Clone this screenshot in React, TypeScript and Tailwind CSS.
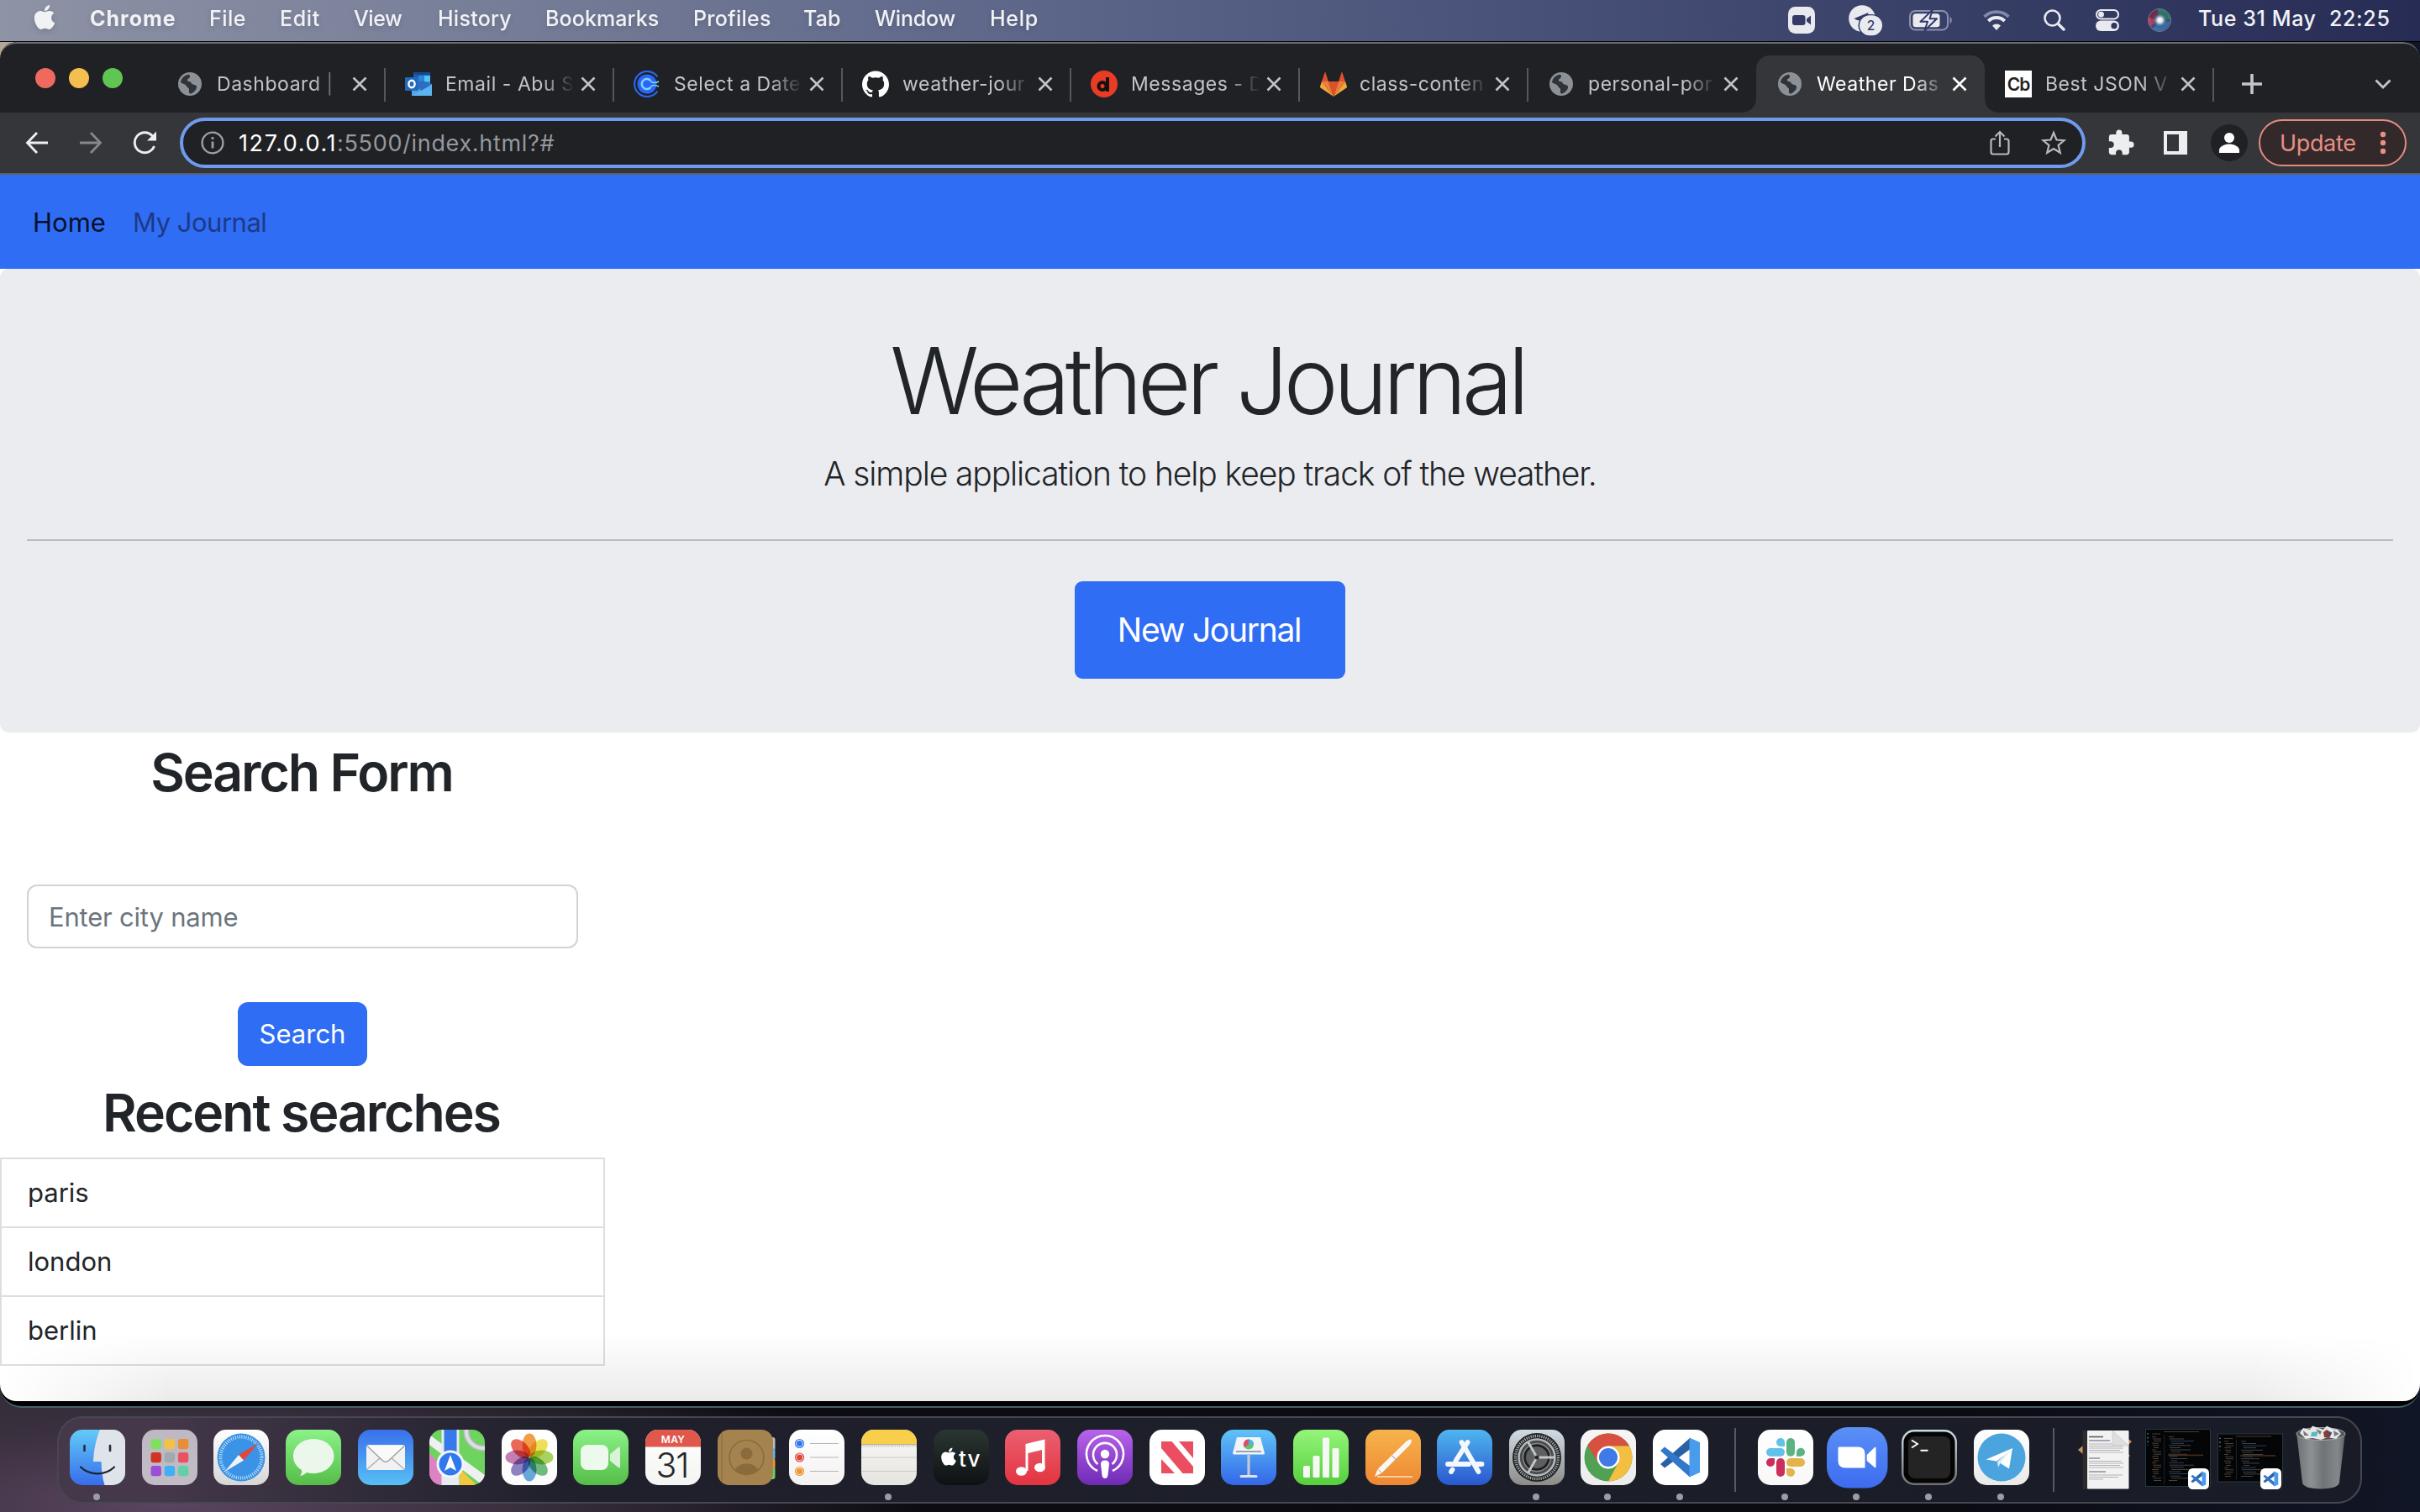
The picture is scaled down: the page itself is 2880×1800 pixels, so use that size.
import React, { type ReactNode } from 'react';
import { SiGithub } from 'react-icons/si';
import { FaApple } from 'react-icons/fa';
import { MdExtension } from 'react-icons/md';

/* ---------- Menu bar ---------- */

const menus = [
  { label: 'Chrome', cls: 'w-[142px] font-bold tracking-[1px]' },
  { label: 'File', cls: 'w-[84px] tracking-[0.5px]' },
  { label: 'Edit', cls: 'w-[88px] tracking-[0.6px]' },
  { label: 'View', cls: 'w-[100px] tracking-[-0.4px]' },
  { label: 'History', cls: 'w-[128px] tracking-[0.25px]' },
  { label: 'Bookmarks', cls: 'w-[176px] tracking-[0.1px]' },
  { label: 'Profiles', cls: 'w-[131px] tracking-[0.25px]' },
  { label: 'Tab', cls: 'w-[85px] tracking-[0.2px]' },
  { label: 'Window', cls: 'w-[137px] tracking-[-0.2px]' },
  { label: 'Help', cls: 'tracking-[0.7px]' },
];

function StatusIcons() {
  return (
    <div className="flex h-full items-center text-[#e9eaf0]">
      <svg width="32" height="32" viewBox="0 0 32 32">
        <rect width="32" height="32" rx="8.5" fill="#e9eaf0" />
        <rect x="5" y="10" width="15.5" height="12" rx="3" fill="#343b66" />
        <path d="M22 14.5 L27 10.5 V21.500 L22 17.500 Z" fill="#343b66" />
      </svg>
      <svg className="ml-10" width="40" height="40" viewBox="0 0 40 40">
        <circle cx="16" cy="18" r="15.800" fill="#e9eaf0" />
        <path d="M6.500 18 L23.500 11 L21 24 L15 20.500 L10 20 Z" fill="#343b66" />
        <rect x="11.500" y="13" width="29" height="26.500" rx="13.200" fill="#343b66" />
        <rect x="13" y="14.300" width="27" height="24" rx="12" fill="#e9eaf0" />
        <text x="26.500" y="32" textAnchor="middle" fontFamily="Inter" fontSize="15.500" fontWeight="500" fill="#343b66">2</text>
      </svg>
      <svg className="ml-8" width="52" height="26" viewBox="0 0 52 26">
        <rect x="1" y="2" width="45" height="22.500" rx="6.500" fill="none" stroke="#8b90b0" strokeWidth="2" />
        <path d="M48.500 9 C51.500 10 51.500 16 48.500 17 Z" fill="#8b90b0" />
        <rect x="4.500" y="5.300" width="32" height="16" rx="3.500" fill="#e9eaf0" />
        <path d="M28 0.500 L13.500 14.800 H22 L18.500 25.500 L33 11.300 H24.500 Z" fill="#e9eaf0" stroke="#31386a" strokeWidth="2" strokeLinejoin="round" />
      </svg>
      <svg className="ml-9" width="32" height="26" viewBox="0 0 32 26" fill="none">
        <path d="M1.500 9 A21 21 0 0 1 30.500 9" stroke="#8388ab" strokeWidth="3.800" />
        <path d="M6.300 14 A14 14 0 0 1 25.700 14" stroke="#e9eaf0" strokeWidth="4" />
        <path d="M16 25 L11 19.500 A7.500 7.500 0 0 1 21 19.500 Z" fill="#e9eaf0" />
      </svg>
      <svg className="ml-10" width="26" height="26" viewBox="0 0 26 26" fill="none" stroke="#e9eaf0">
        <circle cx="10.500" cy="10.500" r="9" strokeWidth="2.600" />
        <path d="M17.500 17.500 L24 24" strokeWidth="3.400" strokeLinecap="round" />
      </svg>
      <svg className="ml-9" width="28" height="28" viewBox="0 0 28 28">
        <rect x="1" y="2" width="26" height="10.500" rx="5.250" fill="none" stroke="#e9eaf0" strokeWidth="2" />
        <circle cx="6.500" cy="7.200" r="3.400" fill="#e9eaf0" />
        <rect x="0" y="14.500" width="28" height="12.500" rx="6.200" fill="#e9eaf0" />
        <circle cx="22" cy="20.700" r="3.600" fill="#2d3460" />
      </svg>
      <svg className="ml-[34px]" width="28" height="28" viewBox="0 0 28 28">
        <defs>
          <radialGradient id="siri" cx="0.52" cy="0.5" r="0.5">
            <stop offset="0" stopColor="#fff" />
            <stop offset="0.25" stopColor="#dfe6ee" />
            <stop offset="0.6" stopColor="#3a5a86" stopOpacity="0.5" />
            <stop offset="1" stopColor="#203050" stopOpacity="0" />
          </radialGradient>
        </defs>
        <circle cx="14" cy="14" r="13.500" fill="#3d5170" stroke="#6f80a0" />
        <path d="M14 14 L1 13 A13 13 0 0 1 12 1.200 Z" fill="#7c2a45" />
        <path d="M14 14 L12 1 A13 13 0 0 1 27 13 Z" fill="#2f8068" />
        <path d="M14 14 L3 21 A13 13 0 0 1 1 11 Z" fill="#c8405f" />
        <path d="M14 14 L26 16 A13 13 0 0 1 6 24 Z" fill="#3d77b8" />
        <circle cx="14" cy="14" r="12" fill="url(#siri)" />
      </svg>
    </div>
  );
}

function MenuBar() {
  return (
    <header className="flex h-[50px] shrink-0 items-center border-b border-black bg-linear-to-r from-[#8e93a5] via-[#555f84] to-[#272c55] pb-1 text-[25px] leading-none font-medium text-[#f1f2f6]">
      <FaApple className="mr-[39px] ml-[38px] -mt-1 h-[33px] w-[30px] drop-shadow-md" />
      <nav className="flex whitespace-nowrap drop-shadow-md">
        {menus.map((m) => (
          <span key={m.label} className={m.cls}>
            {m.label}
          </span>
        ))}
      </nav>
      <div className="ml-auto flex h-full items-center pr-[36px]">
        <div className="mr-[32px] pt-[3px]">
          <StatusIcons />
        </div>
        <span className="w-[156px] whitespace-nowrap tracking-[0.6px]">Tue 31 May</span>
        <span className="w-[72px] tracking-[0.65px]">22:25</span>
      </div>
    </header>
  );
}

/* ---------- Favicons ---------- */

function Globe() {
  return (
    <svg width="32" height="32" viewBox="0 0 32 32">
      <circle cx="16" cy="16" r="14" fill="#8b9197" />
      <path d="M5 14 C5.500 9 10 5.200 14.500 4.800 C16 5 16.500 7 15.500 8.500 C14 10 12.500 10 13 12 C13.500 13.500 17 12.500 17.500 14.500 C18 16.500 21 16.500 23 17.500 C25 19 24 22.500 21.500 24.500 C19.500 26.500 17.500 28 16 27.500 C14.500 26.500 15 23.500 15 22 C14.500 20 12.500 20.500 12 18.500 C11.500 16.500 7.500 16 5 14 Z" fill="#303338" />
    </svg>
  );
}

function Outlook() {
  return (
    <svg width="32" height="32" viewBox="0 0 32 32">
      <rect x="10" y="2" width="20" height="22" fill="#1a5fb4" />
      <rect x="10" y="2" width="20" height="3" fill="#174a8c" />
      <rect x="16" y="6" width="7" height="7" fill="#2f86d8" />
      <rect x="23" y="6" width="7" height="7" fill="#50c3f5" />
      <rect x="23" y="13" width="7" height="7" fill="#2f8fe0" />
      <path d="M8 16 L32 16 V30 H8 Z" fill="#4ea5e8" />
      <path d="M8 16 L20 24 L32 16 L20 12 Z" fill="#2b6fbf" />
      <path d="M8 30 L32 17 V30 Z" fill="#5bb4f0" />
      <rect x="0" y="8" width="16" height="16" rx="1" fill="#2468bd" />
      <ellipse cx="8" cy="16" rx="3.600" ry="4.200" fill="none" stroke="#fff" strokeWidth="2.400" />
    </svg>
  );
}

function Calendly() {
  return (
    <svg width="32" height="32" viewBox="0 0 32 32" fill="none">
      <path d="M28.500 7.500 A15 15 0 1 0 28.500 24.500" stroke="#2b66f0" strokeWidth="2.200" />
      <circle cx="16" cy="16" r="11.500" fill="#2b66f6" />
      <path d="M20.500 12.300 A6 6 0 1 0 20.500 19.700" stroke="#7fd8f5" strokeWidth="2.400" />
      <path d="M20.500 12.800 Q24 16 30 13 M20.500 19.200 Q24 16 30 19" stroke="#7fd8f5" strokeWidth="1.600" />
    </svg>
  );
}

function Disco() {
  return (
    <svg width="32" height="32" viewBox="0 0 32 32">
      <circle cx="16" cy="16" r="16" fill="#ea3c24" />
      <circle cx="14" cy="18.500" r="4.500" fill="none" stroke="#16110f" strokeWidth="4" />
      <path d="M18 8 H22 V25 H18 Z" fill="#16110f" />
    </svg>
  );
}

function Gitlab() {
  return (
    <svg width="34" height="32" viewBox="0 0 34 32">
      <path d="M17 31 L11 13 H23 Z" fill="#e0512b" />
      <path d="M17 31 L11 13 H3 Z" fill="#ef7d35" />
      <path d="M17 31 L23 13 H31 Z" fill="#ef7d35" />
      <path d="M3 13 L1 19 C0.800 19.600 1 20 1.500 20.500 L17 31 Z" fill="#f3a43f" />
      <path d="M31 13 L33 19 C33.200 19.600 33 20 32.500 20.500 L17 31 Z" fill="#f3a43f" />
      <path d="M3 13 H11 L7 1 Z M31 13 H23 L27 1 Z" fill="#dd5130" />
    </svg>
  );
}

function CodeBeautify() {
  return (
    <span className="flex size-8 items-center justify-center bg-white text-[21px] leading-none font-semibold tracking-[-1px] text-[#222]">
      Cb
    </span>
  );
}

/* ---------- Browser chrome ---------- */

type TabInfo = { title: string; icon: ReactNode; active?: boolean; divider?: boolean };

const tabs: TabInfo[] = [
  { title: 'Dashboard |', icon: <Globe />, divider: true },
  { title: 'Email - Abu S', icon: <Outlook />, divider: true },
  { title: 'Select a Date', icon: <Calendly />, divider: true },
  { title: 'weather-jour', icon: <SiGithub className="size-8 text-white" />, divider: true },
  { title: 'Messages - D', icon: <Disco />, divider: true },
  { title: 'class-conten', icon: <Gitlab />, divider: true },
  { title: 'personal-por', icon: <Globe /> },
  { title: 'Weather Das', icon: <Globe />, active: true },
  { title: 'Best JSON V', icon: <CodeBeautify />, divider: true },
];

function Cross({ className }: { className: string }) {
  return (
    <svg className={className} width="18" height="18" viewBox="0 0 18 18" fill="none" stroke="currentColor" strokeWidth="2.600">
      <path d="M1.500 1.500 L16.500 16.500 M16.500 1.500 L1.500 16.500" />
    </svg>
  );
}

function Tab({ title, icon, active, divider }: TabInfo) {
  return (
    <div className={`relative flex h-[68px] w-[272px] shrink-0 items-center rounded-t-2xl pl-6 ${active ? 'bg-[#35363a] text-white' : 'text-[#c2c4c7]'}`}>
      {active && (
        <>
          <span className="absolute bottom-0 -left-4 size-4 bg-[radial-gradient(circle_at_0_0,transparent_15.5px,#35363a_16px)]" />
          <span className="absolute -right-4 bottom-0 size-4 bg-[radial-gradient(circle_at_100%_0,transparent_15.5px,#35363a_16px)]" />
        </>
      )}
      <span className="flex w-12 shrink-0">{icon}</span>
      <span className="w-[160px] mask-r-from-[72%] mask-r-to-[96%] pb-px text-[23px] leading-[32px] tracking-[0.55px] whitespace-nowrap">{title}</span>
      <Cross className="ml-px shrink-0" />
      {divider && <span className="absolute top-[15px] right-[-1px] h-10 w-[2px] bg-[#54575b]" />}
    </div>
  );
}

function TabStrip() {
  return (
    <div className="flex h-[82px] items-end pl-[42px]">
      <div className="mb-[29px] flex gap-4">
        <span className="size-6 rounded-full bg-[#ee6a5f]" />
        <span className="size-6 rounded-full bg-[#f5bf4f]" />
        <span className="size-6 rounded-full bg-[#61c554]" />
      </div>
      <div className="ml-10 flex">
        {tabs.map((t) => (
          <Tab key={t.title} {...t} />
        ))}
      </div>
      <svg className="mb-[22px] ml-[34px]" width="24" height="24" viewBox="0 0 24 24" stroke="#c4c6c9" strokeWidth="3.600">
        <path d="M12 0 V24 M0 12 H24" />
      </svg>
      <svg className="mb-[28px] ml-[134px]" width="20" height="12" viewBox="0 0 20 12" fill="none" stroke="#c4c6c9" strokeWidth="2.800">
        <path d="M1.500 1.500 L10 10 L18.500 1.500" />
      </svg>
    </div>
  );
}

function Toolbar() {
  return (
    <div className="flex h-[74px] items-center border-b-2 border-[#5c5f63] bg-[#35363a] pl-[30px]">
      <svg width="28" height="28" viewBox="0 0 28 28" fill="none" stroke="#eceef0" strokeWidth="2.800">
        <path d="M27 14 H3 M14 2 L2.500 14 L14 26" />
      </svg>
      <svg className="ml-9" width="28" height="28" viewBox="0 0 28 28" fill="none" stroke="#85878b" strokeWidth="2.800">
        <path d="M1 14 H25 M14 2 L25.500 14 L14 26" />
      </svg>
      <svg className="ml-9" width="30" height="28" viewBox="0 0 30 28" fill="none" stroke="#eceef0" strokeWidth="2.900">
        <path d="M25.500 18 A12 12 0 1 1 23.500 6" />
        <path d="M28 0.500 V11.500 H17 Z" fill="#eceef0" stroke="none" />
      </svg>
      <div className="ml-[26px] flex h-[60px] w-[2268px] items-center rounded-full border-4 border-[#709aec] bg-[#202124] pl-[21px]">
        <svg width="28" height="28" viewBox="0 0 28 28" fill="none" stroke="#9aa0a6" strokeWidth="2.400">
          <circle cx="14" cy="14" r="12.400" />
          <path d="M14 12.500 V20.500 M14 7 V10" strokeWidth="2.800" />
        </svg>
        <span className="ml-[17px] text-[27px] leading-none whitespace-nowrap text-white">
          <span className="tracking-[1.6px]">127.0.0.1</span>
          <span className="tracking-[0.68px] text-[#95989d]">:5500/index.html?#</span>
        </span>
        <svg className="ml-auto" width="24" height="30" viewBox="0 0 24 30" fill="none" stroke="#b6b8bb" strokeWidth="2.200">
          <path d="M7 10.500 H4 Q1.500 10.500 1.500 13 V26 Q1.500 28.500 4 28.500 H20 Q22.500 28.500 22.500 26 V13 Q22.500 10.500 20 10.500 H17" />
          <path d="M12 20 V2.500 M6.500 7.500 L12 2 L17.500 7.500" />
        </svg>
        <svg className="mr-[19px] ml-[37px]" width="30" height="30" viewBox="0 0 30 30" fill="none" stroke="#b6b8bb" strokeWidth="2.200">
          <path d="M15 3 L18.500 11.500 L27.500 12.200 L20.600 18 L22.800 26.800 L15 22 L7.200 26.800 L9.400 18 L2.500 12.200 L11.500 11.500 Z" />
        </svg>
      </div>
      <MdExtension className="ml-[25px] h-[34px] w-[34px] text-[#eceef0]" />
      <svg className="ml-[34px]" width="28" height="28" viewBox="0 0 28 28">
        <path fillRule="evenodd" d="M0 0 H28 V28 H0 Z M4 4 V24 H18 V4 Z" fill="#eceef0" />
      </svg>
      <svg className="ml-[28px]" width="44" height="44" viewBox="0 0 44 44">
        <circle cx="22" cy="22" r="22" fill="#202124" />
        <circle cx="22" cy="16" r="6" fill="#fff" />
        <path d="M10 34 V31 C10 26 17 23.500 22 23.500 C27 23.500 34 26 34 31 V34 Z" fill="#fff" />
      </svg>
      <div className="ml-[13px] flex h-14 w-[176px] items-center rounded-full border-2 border-[#e48b80] bg-[#33292b] pl-[23px] text-[27px] leading-none tracking-[-0.35px] text-[#e98f84]">
        Update
        <svg className="ml-[28px]" width="8" height="28" viewBox="0 0 8 28" fill="#e98f84">
          <circle cx="4" cy="4" r="3.200" />
          <circle cx="4" cy="14" r="3.200" />
          <circle cx="4" cy="24" r="3.200" />
        </svg>
      </div>
    </div>
  );
}

/* ---------- Web page ---------- */

const searches = ['paris', 'london', 'berlin'];

function Page() {
  return (
    <main className="relative flex-1 bg-white text-[31px] font-[430] text-[#212529]">
      <nav className="flex h-[112px] items-center gap-[31px] bg-[#306df5] pl-[39px] leading-none">
        <a className="w-[88px] text-[#06102a]">Home</a>
        <a className="tracking-[-0.5px] text-[#1c3a86]">My Journal</a>
      </nav>
      <section className="flex h-[552px] flex-col items-center rounded-[10px] bg-[#ebecef] px-8 pt-[66px]">
        <h1 className="mr-[6px] text-[109.5px] leading-[134px] font-[320] tracking-[-5.5px] whitespace-nowrap">Weather Journal</h1>
        <p className="mt-[14px] text-[39px] leading-[60px] font-[340] tracking-[-1.1px]">A simple application to help keep track of the weather.</p>
        <hr className="mt-12 h-[2px] w-full border-0 bg-[#b8babd]" />
        <button className="mt-12 h-[116px] w-[322px] rounded-[9px] bg-[#306df5] pt-px pr-[2px] text-[39px] font-[430] tracking-[-1.3px] text-white">New Journal</button>
      </section>
      <aside className="flex w-[720px] flex-col">
        <h2 className="mt-[9px] mb-px pr-[2px] text-center text-[62.5px] leading-[76px] font-[570] tracking-[-2.1px]">Search Form</h2>
        <input className="mx-8 mt-[95px] h-[76px] rounded-xl border-2 border-[#ced4da] px-6 tracking-[-0.2px] placeholder:text-[#6c757d]" placeholder="Enter city name" />
        <button className="mt-16 h-[76px] w-[154px] self-center rounded-xl bg-[#306df5] pt-px text-white">Search</button>
        <h2 className="mt-[17px] pr-[3px] text-center text-[62.5px] leading-[76px] font-[570] tracking-[-2.05px]">Recent searches</h2>
        <ul className="mt-4 border-2 border-b-0 border-[#dedede]">
          {searches.map((s) => (
            <li key={s} className="flex h-[82px] items-center border-b-2 border-[#dedede] pt-px pl-[31px]">
              {s}
            </li>
          ))}
        </ul>
      </aside>
      <div className="pointer-events-none absolute inset-x-0 bottom-0 h-[80px] bg-linear-to-b from-transparent to-black/8 mask-x-from-[93%] mask-x-to-100%" />
    </main>
  );
}

/* ---------- Dock ---------- */

function Tile({ id, from, to, children }: { id: string; from: string; to: string; children?: ReactNode }) {
  return (
    <svg className="overflow-visible" width="66" height="66" viewBox="0 0 66 66">
      <defs>
        <linearGradient id={`g-${id}`} x1="0" y1="0" x2="0" y2="1">
          <stop offset="0" stopColor={from} />
          <stop offset="1" stopColor={to} />
        </linearGradient>
        <clipPath id={`c-${id}`}>
          <rect width="66" height="66" rx="15" />
        </clipPath>
      </defs>
      <g clipPath={`url(#c-${id})`}>
        <rect width="66" height="66" fill={`url(#g-${id})`} />
        {children}
      </g>
    </svg>
  );
}

const Finder = () => (
  <Tile id="finder" from="#62cbf8" to="#376cec">
    <path d="M36 0 C31 12 28.500 25 28 38 H37.600 C37.600 48 39 58 41.500 66 H66 V0 Z" fill="#dfe3ea" />
    <path d="M17.500 19 V25 M48 19 V25" stroke="#252b36" strokeWidth="2.600" strokeLinecap="round" />
    <path d="M13 44.500 C24 55 42 55 53 44.500" fill="none" stroke="#1d2430" strokeWidth="2.200" strokeLinecap="round" />
  </Tile>
);

const launchColors = ['#7fe05e', '#f3c244', '#e98e36', '#cf3428', '#a3a9ad', '#ea5264', '#9c4fd6', '#3fb0f5', '#63cfa6'];
const Launchpad = () => (
  <Tile id="launch" from="#bdb8c1" to="#c1bcc6">
    {launchColors.map((c, i) => (
      <rect key={c} x={10.500 + (i % 3) * 16.200} y={11 + Math.floor(i / 3) * 16} width="12.400" height="12.200" rx="3" fill={c} />
    ))}
  </Tile>
);

const Safari = () => (
  <Tile id="safari" from="#ffffff" to="#d6d6d6">
    <circle cx="33" cy="33" r="28.500" fill="#3a93e6" />
    <circle cx="33" cy="33" r="24.500" fill="none" stroke="#d8ecfb" strokeWidth="4" strokeDasharray="0.9 1.66" />
    <path d="M53.500 16 L30 30 L36 36.500 Z" fill="#e5453a" />
    <path d="M13.500 50 L30 30 L36 36.500 Z" fill="#f1f3f5" />
  </Tile>
);

const Messages = () => (
  <Tile id="messages" from="#8af287" to="#55bd47">
    <path d="M33 11 C47 11 57.500 20 57.500 31.500 C57.500 43 47 52 33 52 C30 52 27.500 51.600 25 51 C22.500 53.500 20 54.500 17 55 C19 52.500 19.500 50.500 19 48 C12.500 44 9 38.500 9 31.500 C9 20 19.500 11 33 11 Z" fill="#eaf7ea" />
  </Tile>
);

const Mail = () => (
  <Tile id="mail" from="#3a70ea" to="#58bff5">
    <rect x="10" y="18" width="46" height="30" rx="3" fill="#f2f2f2" />
    <path d="M11 47 L27 33 M55 47 L39 33" stroke="#a9adb2" strokeWidth="1.300" />
    <path d="M11 19.500 L29 36.500 Q33 40 37 36.500 L55 19.500" fill="#fafafa" stroke="#9aa0a6" strokeWidth="1.400" />
  </Tile>
);

const Maps = () => (
  <Tile id="maps" from="#6fd35f" to="#6fd35f">
    <path d="M0 28 L26 54 V66 H0 Z" fill="#dd82c4" />
    <path d="M36 66 V46 L56 66 Z" fill="#f3c83e" />
    <path d="M0 12 L66 62 V48 L0 0 Z" fill="#eef0f2" transform="translate(0 6)" />
    <circle cx="64" cy="2" r="20" fill="none" stroke="#b9bcc2" strokeWidth="7" />
    <circle cx="64" cy="2" r="20" fill="none" stroke="#dcdfe3" strokeWidth="4" />
    <path d="M14.500 0 H35.500 V66 H14.500 Z" fill="#e7eaee" />
    <path d="M17.500 0 H32.500 V42 H17.500 Z" fill="#3779ea" />
    <circle cx="25" cy="41" r="16.500" fill="#f2f5fa" />
    <circle cx="25" cy="41" r="13.500" fill="#2f78ee" />
    <path d="M25 30 L32 49 L25 45 L18 49 Z" fill="#fff" />
  </Tile>
);

const petals = ['#f08c28', '#ecdc3a', '#9ccc45', '#57b06a', '#4e9bd6', '#7d70bb', '#bb6aa8', '#e8503c'];
const Photos = () => (
  <Tile id="photos" from="#ffffff" to="#fbfbfb">
    {petals.map((c, i) => (
      <ellipse key={c} cx="33" cy="18.500" rx="8.500" ry="14" fill={c} opacity="0.85" transform={`rotate(${i * 45} 33 33)`} className="mix-blend-multiply" />
    ))}
  </Tile>
);

const FaceTime = () => (
  <Tile id="facetime" from="#8af287" to="#55bd47">
    <rect x="9" y="18" width="33" height="30" rx="8" fill="#eef9ee" />
    <path d="M44 29 L54.500 20.500 Q56 20 56 22 V44 Q56 46 54.500 45.500 L44 37 Z" fill="#d9f2d8" />
  </Tile>
);

const Calendar = () => (
  <Tile id="calendar" from="#ffffff" to="#f4f4f2">
    <rect width="66" height="20.500" fill="#e0584c" />
    <text x="33" y="15.500" textAnchor="middle" fontFamily="Inter" fontSize="12" fontWeight="600" letterSpacing="0.4" fill="#fff">MAY</text>
    <text x="32" y="56.500" textAnchor="middle" fontFamily="Inter" fontSize="41" fontWeight="300" letterSpacing="-1" fill="#26262a">31</text>
  </Tile>
);

const Contacts = () => (
  <svg width="70" height="66" viewBox="0 0 70 66">
    <rect x="56" y="9" width="12.500" height="16" rx="3" fill="#b9bcbf" />
    <rect x="56" y="22" width="12.500" height="14" rx="3" fill="#62b5ec" />
    <rect x="56" y="34" width="12.500" height="14" rx="3" fill="#ef9434" />
    <rect x="56" y="45" width="12.500" height="14" rx="3" fill="#6bd166" />
    <rect width="66" height="66" rx="14" fill="#a5834f" />
    <path d="M5 4 V62" stroke="#8d6e3f" strokeWidth="1.200" />
    <circle cx="34.500" cy="33" r="20.500" fill="none" stroke="#8a6b3c" strokeWidth="1.600" />
    <circle cx="34.500" cy="28.500" r="7" fill="#8a6b3c" />
    <path d="M21 48 C24 38 45 38 48 48 C41 55 28 55 21 48 Z" fill="#8a6b3c" />
  </svg>
);

const Reminders = () => (
  <Tile id="reminders" from="#ffffff" to="#f4f2f1">
    {['#2f76f0', '#e0453a', '#ee9430'].map((c, i) => (
      <g key={c}>
        <circle cx="12.500" cy={16.500 + i * 16.500} r="5" fill="none" stroke={c} strokeWidth="1.200" />
        <circle cx="12.500" cy={16.500 + i * 16.500} r="3.500" fill={c} />
        <path d={`M25 ${16.500 + i * 16.500} H59`} stroke="#b5b6ba" strokeWidth="1.200" />
      </g>
    ))}
  </Tile>
);

const Notes = () => (
  <Tile id="notes" from="#fbfbf9" to="#e4e3de">
    <rect width="66" height="17" fill="#f7cf4b" />
    <rect y="17" width="66" height="1.500" fill="#b9b3a4" />
    <path d="M0 20 H66" stroke="#c2bfb8" strokeWidth="1.600" strokeDasharray="1 1.500" />
    <path d="M0 33 H66 M0 49.500 H66" stroke="#cccbc8" strokeWidth="1.200" />
  </Tile>
);

const AppleTV = () => (
  <Tile id="tv" from="#2a3632" to="#0d1112">
    <foreignObject x="8" y="20" width="22" height="26">
      <FaApple className="h-[24px] w-[20px] text-white" />
    </foreignObject>
    <text x="30" y="43.500" fontFamily="Inter" fontSize="26" fontWeight="500" letterSpacing="1" fill="#fff">tv</text>
  </Tile>
);

const Music = () => (
  <Tile id="music" from="#ea6072" to="#e3343f">
    <path d="M24.500 17 L47.500 11.500 V44 H44 V24 L27.500 28 V49 H24.500 Z" fill="#fff" />
    <ellipse cx="19.500" cy="49.500" rx="6.500" ry="5.200" fill="#fff" />
    <ellipse cx="41.500" cy="45" rx="6.500" ry="5.200" fill="#fff" />
  </Tile>
);

const Podcasts = () => (
  <Tile id="podcasts" from="#b863ec" to="#6f2ab4">
    <g fill="none" stroke="#fff" strokeWidth="2.600">
      <path d="M24 49 A22 22 0 1 1 42 49" />
      <path d="M24.500 41 A14 14 0 1 1 41.500 41" />
    </g>
    <circle cx="33" cy="29" r="5.200" fill="#fff" />
    <path d="M28 41 Q28 36.500 33 36.500 Q38 36.500 38 41 L36.500 54 Q36 58 33 58 Q30 58 29.500 54 Z" fill="#fff" />
  </Tile>
);

const News = () => (
  <Tile id="news" from="#ffffff" to="#ffffff">
    <path d="M14 14 H26.500 L52 44 V52 H39.500 L14 22 Z M35 14 H52 V34 Z M14 35 L30 52 H14 Z" fill="#ea4e60" />
  </Tile>
);

const Keynote = () => (
  <Tile id="keynote" from="#5fc4f8" to="#3366e8">
    <path d="M19 9 H47 L52 28 Q52 29.500 50.500 29.500 H15.500 Q14 29.500 14 28 Z" fill="#f2f4f7" />
    <path d="M18 26 H48" stroke="#7d8a99" strokeWidth="1.600" />
    <circle cx="33" cy="17.500" r="6" fill="#5ac76b" />
    <path d="M33 17.500 V11.500 A6 6 0 0 1 39 17.500 Z" fill="#4eb3e8" />
    <path d="M33 17.500 V11.500 A6 6 0 0 0 28 21 Z" fill="#e04a6a" />
    <path d="M33 30 V55" stroke="#c4cad4" strokeWidth="3.200" />
    <rect x="22.500" y="54" width="21" height="3" rx="1.500" fill="#dfe3e9" />
  </Tile>
);

const Numbers = () => (
  <Tile id="numbers" from="#94f57a" to="#56cf3d">
    <rect x="12" y="43" width="8" height="14" rx="1.500" fill="#f6f8f5" />
    <rect x="23.500" y="31" width="8" height="26" rx="1.500" fill="#f6f8f5" />
    <rect x="35" y="9.500" width="8" height="47.500" rx="1.500" fill="#f6f8f5" />
    <rect x="46.500" y="22" width="8" height="35" rx="1.500" fill="#f6f8f5" />
  </Tile>
);

const Pages = () => (
  <Tile id="pages" from="#f7b44b" to="#ee8733">
    <path d="M14 56 H56" stroke="#f7cf9f" strokeWidth="2" />
    <path d="M11 56 L14.500 47 L48 14.500 Q53 10.500 54.500 12 Q56 14 52 19 L19.500 51.500 Z" fill="#f7f7f5" />
    <path d="M14.500 47 L19.500 51.500" stroke="#b9a27f" strokeWidth="1" />
    <path d="M32 31 L36 35.500" stroke="#888" strokeWidth="1" />
  </Tile>
);

const AppStore = () => (
  <Tile id="appstore" from="#50b5f0" to="#2957cf">
    <g stroke="#f4f7fb" strokeWidth="5.800" strokeLinecap="round" fill="none">
      <path d="M36.500 15 L22.500 37" />
      <path d="M29.500 15 L49.500 50" />
      <path d="M13 41 H38 M46.500 41 H53.500" />
      <path d="M18.500 47.500 L17 50" />
    </g>
  </Tile>
);

const Settings = () => (
  <Tile id="settings" from="#cfdbe3" to="#8e8b88">
    <circle cx="33" cy="33" r="29" fill="#1f2224" />
    <circle cx="33" cy="33" r="25.500" fill="none" stroke="#a9adb0" strokeWidth="3.400" strokeDasharray="1.3 1.3" />
    <circle cx="33" cy="33" r="21.500" fill="#4a4d4f" stroke="#b4b8ba" strokeWidth="2.600" />
    <circle cx="33" cy="33" r="14.500" fill="#5d5f60" stroke="#1d1f21" strokeWidth="3" />
    <circle cx="33" cy="33" r="16.500" fill="none" stroke="#85898b" strokeWidth="1.500" />
    <path d="M33 33 H54 M33 33 L22.500 14.500 M33 33 L22.500 51.500" stroke="#c3c7c9" strokeWidth="2.800" />
    <circle cx="33" cy="33" r="2.500" fill="#27292b" />
  </Tile>
);

const Chrome = () => (
  <Tile id="chrome" from="#f6f6f6" to="#ececec">
    <g transform="translate(33 33)">
      <circle r="28.500" fill="#50a153" />
      <path d="M-24.700 -14.200 A28.500 28.500 0 0 1 25.100 -13.500 L0 -13.500 L-11.700 6.750 Z" fill="#d85040" />
      <path d="M0 -13.500 L25.100 -13.500 A28.500 28.500 0 0 1 0 28.500 L11.700 6.750 Z" fill="#f2bf42" />
      <circle r="13.500" fill="#fff" />
      <circle r="11" fill="#4079e8" />
    </g>
  </Tile>
);

const CodeMark = () => (
  <>
    <path d="M9 41 L14 45.500 L44 23.500 V10 Z" fill="#2862a5" />
    <path d="M9 25 L14 20.500 L44 43 V56.500 Z" fill="#3277c9" />
    <path d="M43.500 9.500 L56 15 V51 L43.500 56.500 Z" fill="#4a9bec" />
  </>
);

const VSCode = ({ id }: { id: string }) => (
  <Tile id={id} from="#ffffff" to="#ffffff">
    <CodeMark />
  </Tile>
);

const Slack = () => (
  <Tile id="slack" from="#ffffff" to="#f8f8f8">
    <path d="M32 20 H27 A5 5 0 1 1 32 15 Z" fill="#61c1ea" />
    <rect x="10" y="22" width="22" height="9.700" rx="4.850" fill="#61c1ea" />
    <rect x="34" y="10" width="10" height="21.700" rx="5" fill="#5bb381" />
    <path d="M46 31.700 V26.800 A5 5 0 1 1 51 31.700 Z" fill="#5bb381" />
    <rect x="34" y="34" width="22" height="10" rx="5" fill="#e2b44b" />
    <path d="M34 46 H39 A5 5 0 1 1 34 51 Z" fill="#e2b44b" />
    <path d="M20 34 V39 A5 5 0 1 1 15 34 Z" fill="#cc2f5b" />
    <rect x="22" y="34" width="10" height="22" rx="5" fill="#cc2f5b" />
  </Tile>
);

const Zoom = () => (
  <svg className="overflow-visible" width="66" height="66" viewBox="0 0 66 66">
    <defs>
      <linearGradient id="g-zoom" x1="0" y1="0" x2="0" y2="1">
        <stop offset="0" stopColor="#5a8ff6" />
        <stop offset="1" stopColor="#3d6cf0" />
      </linearGradient>
    </defs>
    <rect x="-3" y="-3" width="72.500" height="72.500" rx="25" fill="url(#g-zoom)" />
    <path d="M12 20.500 H34 Q42.500 20.500 42.500 29 V45.500 H19 Q10.500 45.500 10.500 37 V22 Q10.500 20.500 12 20.500 Z" fill="#fff" />
    <path d="M44.700 30 L54 21 Q55.500 20 55.500 22 V44 Q55.500 46 54 45 L44.700 37 Z" fill="#fff" />
  </svg>
);

const Terminal = () => (
  <Tile id="terminal" from="#c9dfe8" to="#6f6f71">
    <rect x="2.500" y="2.500" width="61" height="61" rx="12.500" fill="#050505" />
    <rect x="8" y="8" width="50" height="50" rx="7.500" fill="#242424" />
    <path d="M12 12.500 L19 17 L12 21.500" fill="none" stroke="#fff" strokeWidth="1.900" />
    <path d="M22.500 24.700 H31.500" stroke="#fff" strokeWidth="1.900" />
  </Tile>
);

const Telegram = () => (
  <Tile id="telegram" from="#ffffff" to="#e9e9e9">
    <circle cx="33" cy="33" r="28.500" fill="#4ca4de" />
    <path d="M14.500 35.500 L46 22 L42 46.500 L31 39.500 L36.500 30.500 L27 37.500 Z" fill="#fff" />
    <path d="M28 38 L44.500 23.500 L31.500 40 L29 45 Z" fill="#dcebf5" />
  </Tile>
);

function DocStack() {
  return (
    <svg width="66" height="74" viewBox="0 0 66 74">
      <path d="M0 26 L7 20 V32 Z M58 12 L64 16 L58 22 Z M58 30 L62 33 L58 36 Z" fill="#c99260" />
      <rect x="5.500" y="3" width="6" height="70" fill="#2e2b2b" />
      <rect x="11" y="3" width="49.500" height="69.500" rx="1" fill="#f2f2f2" />
      <path d="M13 10.500 H30" stroke="#555" strokeWidth="1.500" />
      <path d="M13 15 H38 M13 36 H26 M13 52 H33" stroke="#8d8fa0" strokeWidth="1.300" />
      <path d="M13 19 H54 M13 21.500 H53 M13 24 H54 M13 26.500 H50 M13 29 H54 M13 39.500 H52 M13 42 H54 M13 44.500 H50 M13 47 H54 M13 56 H53 M13 58.500 H48 M13 61 H30" stroke="#b3b3b6" strokeWidth="1" />
      <path d="M41 3 L60.500 21 H43 Q41 21 41 19 Z" fill="#dedede" stroke="#c2c2c2" strokeWidth="0.600" />
    </svg>
  );
}

function CodeThumb({ h }: { h: number }) {
  const rows = Math.floor((h - 12) / 2.600);
  return (
    <svg className="overflow-visible" width="78" height="76" viewBox="0 0 78 76">
      <g transform={`translate(0 ${h > 60 ? 4 : 9.500})`}>
        <rect x="0.500" y="0.500" width="77" height={h} fill="#040506" stroke="#24383f" />
        <path d="M22 3.500 H64 M8 6 H18" stroke="#4a3d35" strokeWidth="1" />
        <path d={`M22.500 7 V${h - 2}`} stroke="#1e2a30" strokeWidth="0.800" />
        {Array.from({ length: rows }, (_, i) => (
          <g key={i}>
            <rect x={8 + (i % 3)} y={9 + i * 2.600} width={5 + ((i * 5) % 6)} height="0.800" fill={i % 6 === 4 ? '#7c4a24' : '#57524e'} />
            <rect x={28 + (i % 4)} y={9 + i * 2.600} width={6 + ((i * 11) % 24)} height="0.800" fill={i % 5 === 2 ? '#2d4c7c' : '#505358'} />
          </g>
        ))}
        <rect x="27" y={h * 0.450} width="42" height="1.600" fill="#4a2c16" />
        <path d="M3 5 V20" stroke="#6b6f73" strokeWidth="1.600" strokeDasharray="1.600 3.200" />
      </g>
      <g transform="translate(51 51)">
        <rect width="25" height="25" rx="5.500" fill="#fff" />
        <g transform="scale(0.380)">
          <CodeMark />
        </g>
      </g>
    </svg>
  );
}

function Trash() {
  return (
    <svg width="60" height="76" viewBox="0 0 60 76">
      <defs>
        <linearGradient id="g-trash" x1="0" y1="0" x2="1" y2="0">
          <stop offset="0" stopColor="#6f7275" />
          <stop offset="0.300" stopColor="#8e9193" />
          <stop offset="0.550" stopColor="#707376" />
          <stop offset="0.850" stopColor="#85888a" />
          <stop offset="1" stopColor="#5c5f62" />
        </linearGradient>
      </defs>
      <path d="M1 8 L8 68 Q9 75 30 75.500 Q51 75 52 68 L59 8 Q30 24 1 8 Z" fill="url(#g-trash)" />
      <ellipse cx="30" cy="10" rx="29" ry="7.500" fill="#55585b" stroke="#a5a8aa" strokeWidth="1" />
      <path d="M5 9 L9 3 L17 5 L20 0.500 L27 3 L33 5 L37 0.500 L44 4 L50 5 L54 10 L48 16 L38 14 L30 17 L20 15 L12 16 Z" fill="#e8e8e6" />
      <path d="M19 8 L27 7 L25 13 L18 13 Z" fill="#58b8c8" />
      <path d="M33 8 L37 5 L43 9 L40 15 L34 14 Z" fill="#8c3a2c" />
      <path d="M37 7 L43 8 L41 13 Z" fill="#34508f" />
      <path d="M9 6 L16 12 L10 12 Z M45 6 L52 10 L46 13 Z M24 4 L29 11 L31 7 Z" fill="#77797b" />
    </svg>
  );
}

type DockItem = { name: string; icon: ReactNode; running?: boolean };

const apps: DockItem[] = [
  { name: 'Finder', icon: <Finder />, running: true },
  { name: 'Launchpad', icon: <Launchpad /> },
  { name: 'Safari', icon: <Safari /> },
  { name: 'Messages', icon: <Messages /> },
  { name: 'Mail', icon: <Mail /> },
  { name: 'Maps', icon: <Maps /> },
  { name: 'Photos', icon: <Photos /> },
  { name: 'FaceTime', icon: <FaceTime /> },
  { name: 'Calendar', icon: <Calendar /> },
  { name: 'Contacts', icon: <Contacts /> },
  { name: 'Reminders', icon: <Reminders /> },
  { name: 'Notes', icon: <Notes />, running: true },
  { name: 'TV', icon: <AppleTV /> },
  { name: 'Music', icon: <Music /> },
  { name: 'Podcasts', icon: <Podcasts /> },
  { name: 'News', icon: <News /> },
  { name: 'Keynote', icon: <Keynote /> },
  { name: 'Numbers', icon: <Numbers /> },
  { name: 'Pages', icon: <Pages /> },
  { name: 'App Store', icon: <AppStore /> },
  { name: 'System Preferences', icon: <Settings />, running: true },
  { name: 'Google Chrome', icon: <Chrome />, running: true },
  { name: 'Visual Studio Code', icon: <VSCode id="vscode" />, running: true },
];

const extras: DockItem[] = [
  { name: 'Slack', icon: <Slack />, running: true },
  { name: 'Zoom', icon: <Zoom />, running: true },
  { name: 'Terminal', icon: <Terminal />, running: true },
  { name: 'Telegram', icon: <Telegram />, running: true },
];

function DockApp({ icon, running }: DockItem) {
  return (
    <div className="w-[85.65px] shrink-0 pt-[14px]">
      <div className="h-[66px]">{icon}</div>
      {running && <span className="mt-[10px] ml-[28px] block size-2 rounded-full bg-[#9b9ca6]" />}
    </div>
  );
}

function Dock() {
  return (
    <footer className="mt-[10px] ml-[68px] flex h-[104px] w-[2743px] rounded-[30px] border-2 border-[#46474f] bg-linear-to-r from-[#45384a] from-4% via-[#1f202b] via-22% to-[#191c26] pl-[13px]">
      {apps.map((a) => (
        <DockApp key={a.name} {...a} />
      ))}
      <span className="mt-3 ml-[11px] h-[76px] w-[2px] bg-[#585a62]" />
      <div className="ml-[26px] flex">
        {extras.map((a) => (
          <DockApp key={a.name} {...a} />
        ))}
      </div>
      <span className="mt-3 ml-[9px] h-[76px] w-[2px] bg-[#585a62]" />
      <div className="ml-[28px] flex shrink-0 pt-[9px]">
        <div className="mt-[3px] w-[80px]">
          <DocStack />
        </div>
        <div className="w-[86px]">
          <CodeThumb h={68} />
        </div>
        <div className="w-[93px]">
          <CodeThumb h={57} />
        </div>
        <Trash />
      </div>
    </footer>
  );
}

export default function App() {
  return (
    <div className="flex h-[1800px] w-[2880px] flex-col overflow-hidden bg-[radial-gradient(circle_at_0_50px,#b3a695_24px,transparent_26px),radial-gradient(ellipse_900px_200px_at_200px_1790px,#5a4560,#3a303e_45%,transparent_100%),linear-gradient(to_right,#2c2730,#0c0c12_30%,#0b0b12_80%,#111626)] font-['Inter',sans-serif]">
      <MenuBar />
      <div className="flex h-[1626px] shrink-0 flex-col rounded-[26px] border-b-2 border-[#46606c] bg-black">
        <div className="flex h-[1618px] flex-col overflow-hidden rounded-[20px] bg-[#202124]">
          <div className="h-[84px] rounded-t-[20px] border-t-2 border-[#6b6d70]">
            <TabStrip />
          </div>
          <Toolbar />
          <Page />
        </div>
      </div>
      <Dock />
    </div>
  );
}
